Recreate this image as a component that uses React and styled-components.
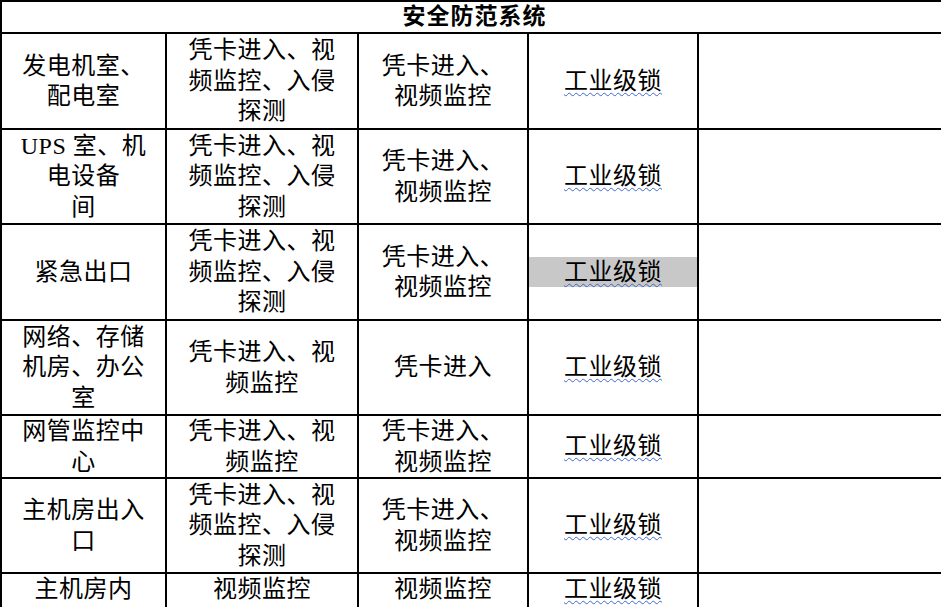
import React from 'react';
import styled, { createGlobalStyle } from 'styled-components';

const GlobalStyle = createGlobalStyle`
  html, body {
    margin: 0;
    padding: 0;
    overflow: hidden;
    background: #fff;
  }
`;

const Table = styled.table`
  border-collapse: collapse;
  table-layout: fixed;
  width: 947px;
  font-family: "Liberation Serif", "Noto Sans CJK SC", serif;
  font-size: 24px;
  letter-spacing: 0.5px;
  color: #000;
`;

const Row = styled.tr`
  height: ${(p) => p.$h}px;
`;

const HeaderCell = styled.th`
  border: 2px solid #000;
  padding: 0;
  font-size: 23px;
  font-weight: bold;
  line-height: 28px;
  letter-spacing: 1px;
  text-align: center;
  vertical-align: middle;
`;

const Cell = styled.td`
  border: 2px solid #000;
  padding: 0;
  text-align: center;
  vertical-align: ${(p) => (p.$top ? 'top' : 'middle')};
  line-height: 30.5px;
`;

const Line = styled.div`
  white-space: nowrap;
  background: ${(p) => (p.$shade ? '#c8c8c8' : 'transparent')};
`;

const Lock = styled.span`
  text-decoration: underline wavy #3f68cc;
  text-decoration-thickness: 1.25px;
  text-underline-offset: 3px;
`;

const rows = [
  { h: 96, a: ['发电机室、', '配电室'], b: ['凭卡进入、视', '频监控、入侵', '探测'], c: ['凭卡进入、', '视频监控'] },
  { h: 95, a: ['UPS 室、机', '电设备', '间'], b: ['凭卡进入、视', '频监控、入侵', '探测'], c: ['凭卡进入、', '视频监控'] },
  { h: 96, a: ['紧急出口'], b: ['凭卡进入、视', '频监控、入侵', '探测'], c: ['凭卡进入、', '视频监控'], shade: true },
  { h: 95, a: ['网络、存储', '机房、办公', '室'], b: ['凭卡进入、视', '频监控'], c: ['凭卡进入'] },
  { h: 62, a: ['网管监控中', '心'], b: ['凭卡进入、视', '频监控'], c: ['凭卡进入、', '视频监控'] },
  { h: 95, a: ['主机房出入', '口'], b: ['凭卡进入、视', '频监控、入侵', '探测'], c: ['凭卡进入、', '视频监控'] },
  { h: 40, a: ['主机房内'], b: ['视频监控'], c: ['视频监控'], top: true },
];

const Lines = ({ items }) => items.map((t, i) => <Line key={i}>{t}</Line>);

export default function App() {
  return (
    <>
      <GlobalStyle />
      <Table>
        <colgroup>
          <col style={{ width: 165 }} />
          <col style={{ width: 192 }} />
          <col style={{ width: 170 }} />
          <col style={{ width: 170 }} />
          <col style={{ width: 250 }} />
        </colgroup>
        <tbody>
          <Row $h={32}>
            <HeaderCell colSpan={5}>安全防范系统</HeaderCell>
          </Row>
          {rows.map((r, i) => (
            <Row key={i} $h={r.h}>
              <Cell $top={r.top}><Lines items={r.a} /></Cell>
              <Cell $top={r.top}><Lines items={r.b} /></Cell>
              <Cell $top={r.top}><Lines items={r.c} /></Cell>
              <Cell $top={r.top}>
                <Line $shade={r.shade}><Lock>工业级锁</Lock></Line>
              </Cell>
              <Cell $top={r.top} />
            </Row>
          ))}
        </tbody>
      </Table>
    </>
  );
}
